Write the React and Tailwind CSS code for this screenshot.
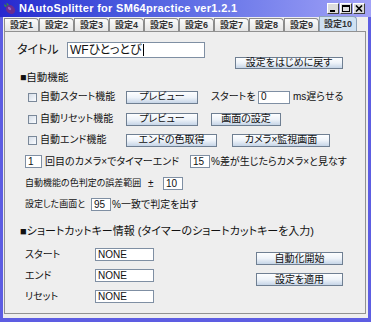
import React from "react";

const btn =
  "flex items-center justify-center shrink-0 whitespace-nowrap border border-[#6f7f92] bg-linear-to-b from-[#fdfeff] via-[#eef3f9] to-[#c6d5e7] text-[10px] leading-none text-[#111]";
const field =
  "shrink-0 bg-white border border-[#7f8fa3] text-[10px] leading-none px-[2px] flex items-center text-[#111]";

function Eggplant() {
  return (
    <svg width="13" height="13" viewBox="0 0 13 13">
      <ellipse cx="7.5" cy="7.5" rx="5" ry="4" transform="rotate(40 7.5 7.5)" fill="#6b2c8f" />
      <ellipse cx="6.5" cy="6.5" rx="2" ry="1.2" transform="rotate(40 6.5 6.5)" fill="#b37ad6" opacity="0.7" />
      <path d="M1 2 L4 4 L2 5 Z M3 1 L5 4 L5.5 2 Z" fill="#3f9a2a" />
    </svg>
  );
}

function WinButton({ kind }) {
  return (
    <div className="w-[12px] h-[11px] bg-[#dcdcdc] border border-t-white border-l-white border-r-[#404040] border-b-[#404040] flex items-center justify-center">
      <svg width="8" height="7" viewBox="0 0 8 7">
        {kind === "min" && <rect x="1" y="5" width="5" height="2" fill="#000" />}
        {kind === "max" && <rect x="0.5" y="0.5" width="7" height="6" fill="none" stroke="#000" strokeWidth="1" />}
        {kind === "max" && <rect x="0" y="0" width="8" height="2" fill="#000" />}
        {kind === "close" && <path d="M1 0.5 L7 6.5 M7 0.5 L1 6.5" stroke="#000" strokeWidth="1.6" />}
      </svg>
    </div>
  );
}

function Tab({ label, active }) {
  return (
    <div
      className={`shrink-0 flex items-center justify-center border border-b-0 rounded-tr-[4px] text-[9px] font-bold leading-none whitespace-nowrap ${
        active
          ? "w-[38px] h-[15px] bg-[#cfe1f2] border-[#8ea2b6] text-[#333]"
          : "w-[35px] h-[13px] bg-linear-to-b from-[#fbfbfb] to-[#e4e4e4] border-[#8c8c8c] text-[#333]"
      }`}
    >
      {label}
    </div>
  );
}

function CheckRow({ label, children }) {
  return (
    <div className="flex items-center h-[14px] whitespace-nowrap">
      <div className="w-[23px] shrink-0" />
      <div className="w-[9px] h-[9px] shrink-0 border border-[#7a8899] bg-linear-to-br from-[#d6dee8] to-[#fafcff]" />
      <div className="w-[89px] shrink-0 pl-[3px] text-[10px] leading-none">{label}</div>
      {children}
    </div>
  );
}

export default function App() {
  const tabs = ["設定1", "設定2", "設定3", "設定4", "設定5", "設定6", "設定7", "設定8", "設定9"];
  return (
    <div className="w-[371px] h-[322px] flex flex-col bg-[#5d5de2] overflow-hidden text-[#111] font-['Liberation_Sans','Noto_Sans_CJK_JP',sans-serif] [font-feature-settings:'palt']">
      {/* title bar */}
      <div className="h-[17px] shrink-0 flex items-center bg-linear-to-r from-[#2727cf] to-[#a2a2f7]">
        <div className="w-[3px]" />
        <Eggplant />
        <div className="ml-[3px] text-white font-bold text-[11px] tracking-[0.3px] leading-none whitespace-nowrap">
          NAutoSplitter for SM64practice ver1.2.1
        </div>
        <div className="ml-auto mr-[6px] flex gap-[1px]">
          <WinButton kind="min" />
          <WinButton kind="max" />
          <WinButton kind="close" />
        </div>
      </div>

      {/* body */}
      <div className="flex-1 mx-[3px] mb-[4px] bg-[#eeeeee] flex flex-col">
        <div className="h-[14px] flex items-end pl-[1px]">
          {tabs.map((t) => (
            <Tab key={t} label={t} />
          ))}
          <Tab label="設定10" active />
        </div>

        <div className="flex-1 ml-[1px] mr-[2px] mb-[4px] border border-[#919191] flex flex-col whitespace-nowrap">
          {/* title */}
          <div className="mt-[10px] flex items-center h-[16px]">
            <div className="w-[12px]" />
            <div className="w-[50px] shrink-0 text-[12px] leading-none">タイトル</div>
            <div className="w-[138px] h-[16px] shrink-0 bg-white border border-[#7f8fa3] flex items-center px-[2px] text-[12px] leading-none">
              WFひとっとび<span className="w-px h-[12px] bg-black ml-px" />
            </div>
          </div>
          <div className="mt-[-1px] flex h-[12px]">
            <div className="w-[230px]" />
            <div className={`${btn} w-[108px] h-[12px]`}>設定をはじめに戻す</div>
          </div>

          <div className="mt-[1px] h-[14px] flex items-center pl-[15px] text-[10.5px] leading-none">■自動機能</div>

          <div className="mt-[6px]">
            <CheckRow label="自動スタート機能">
              <div className={`${btn} w-[72px] h-[13px]`}>プレビュー</div>
              <div className="ml-[13px] w-[47px] shrink-0 text-[10px] leading-none">スタートを</div>
              <div className={`${field} w-[32px] h-[13px]`}>0</div>
              <div className="ml-[3px] text-[10px] leading-none">ms遅らせる</div>
            </CheckRow>
          </div>

          <div className="mt-[8px]">
            <CheckRow label="自動リセット機能">
              <div className={`${btn} w-[72px] h-[13px]`}>プレビュー</div>
              <div className={`${btn} ml-[13px] w-[70px] h-[13px]`}>画面の設定</div>
            </CheckRow>
          </div>

          <div className="mt-[7px]">
            <CheckRow label="自動エンド機能">
              <div className={`${btn} w-[91px] h-[13px]`}>エンドの色取得</div>
              <div className={`${btn} ml-[15px] w-[98px] h-[13px]`}>カメラ×監視画面</div>
            </CheckRow>
          </div>

          <div className="mt-[8px] h-[13px] flex items-center">
            <div className="w-[20px]" />
            <div className={`${field} w-[17px] h-[13px]`}>1</div>
            <div className="w-[148px] shrink-0 pl-[3px] text-[10px] leading-none">回目のカメラ×でタイマーエンド</div>
            <div className={`${field} w-[20px] h-[13px]`}>15</div>
            <div className="ml-[1px] text-[10px] leading-none">%差が生じたらカメラ×と見なす</div>
          </div>

          <div className="mt-[9px] h-[13px] flex items-center">
            <div className="w-[20px]" />
            <div className="w-[123px] shrink-0 text-[9px] leading-none">自動機能の色判定の誤差範囲</div>
            <div className="w-[15px] shrink-0 text-[10px] leading-none">±</div>
            <div className={`${field} w-[20px] h-[13px]`}>10</div>
          </div>

          <div className="mt-[8px] h-[13px] flex items-center">
            <div className="w-[20px]" />
            <div className="w-[66px] shrink-0 text-[9px] leading-none">設定した画面と</div>
            <div className={`${field} w-[20px] h-[13px]`}>95</div>
            <div className="ml-[1px] text-[10px] leading-none">%一致で判定を出す</div>
          </div>

          <div className="mt-[13px] h-[14px] flex items-center pl-[15px] text-[11px] leading-none">
            ■ショートカットキー情報 (タイマーのショートカットキーを入力)
          </div>

          <div className="mt-[10px] flex">
            <div className="w-[20px]" />
            <div className="w-[129px] shrink-0 flex flex-col gap-[8px]">
              {["スタート", "エンド", "リセット"].map((k) => (
                <div key={k} className="h-[13px] flex items-center">
                  <div className="w-[70px] shrink-0 text-[10px] leading-none">{k}</div>
                  <div className={`${field} w-[59px] h-[13px]`}>NONE</div>
                </div>
              ))}
            </div>
            <div className="ml-[102px] mt-[4px] flex flex-col gap-[8px]">
              <div className={`${btn} w-[87px] h-[13px]`}>自動化開始</div>
              <div className={`${btn} w-[87px] h-[13px]`}>設定を適用</div>
            </div>
          </div>
        </div>
      </div>
    </div>
  );
}
